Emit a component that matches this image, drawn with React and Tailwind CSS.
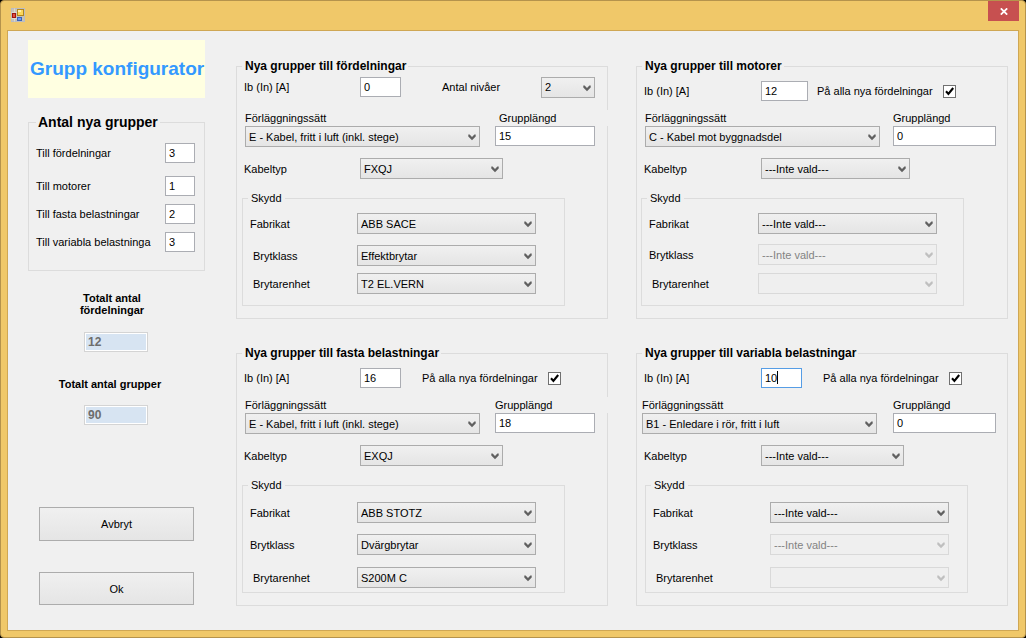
import React from "react";

const GROUPS = [
  {
    id: "fordelningar",
    title: "Nya grupper till fördelningar",
    ib: "0",
    levels: "2",
    method: "E - Kabel, fritt i luft (inkl. stege)",
    length: "15",
    cable: "FXQJ",
    protection: [
      { label: "Fabrikat", value: "ABB SACE" },
      { label: "Brytklass", value: "Effektbrytar", indent: true },
      { label: "Brytarenhet", value: "T2 EL.VERN", indent: true },
    ],
    ui: {
      top: "pb-[9px]",
      lead: "w-[116px]",
      ib: "w-[41px]",
      pair: "grid-cols-[1fr_100px] gap-x-[15px] pl-2 pr-3",
      lengthLabel: "-mr-[13px] pl-1",
      cable: "w-[143px]",
      box: "ml-[5px] mr-[42px]",
      boxBody: "pt-2 pb-[11px] pr-7",
      name: "w-[114px]",
      gap: "mt-[11px]",
      lastGap: "mt-[7px]",
    },
  },
  {
    id: "motorer",
    title: "Nya grupper till motorer",
    ib: "12",
    method: "C - Kabel mot byggnadsdel",
    length: "0",
    cable: "---Inte vald---",
    protection: [
      { label: "Fabrikat", value: "---Inte vald---" },
      { label: "Brytklass", value: "---Inte vald---", disabled: true },
      { label: "Brytarenhet", value: "", disabled: true, indent: true },
    ],
    ui: {
      top: "pb-px",
      lead: "w-[117px]",
      ib: "w-[47px]",
      all: "ml-[9px]",
      pair: "grid-cols-[1fr_103px] gap-x-[13px] pl-2 pr-[11px]",
      lengthLabel: "",
      cable: "w-[149px]",
      box: "ml-1 mr-[43px]",
      boxBody: "pt-2 pb-[11px] pr-[26px]",
      name: "w-[116px]",
      gap: "mt-[10px]",
      lastGap: "mt-2",
    },
  },
  {
    id: "fasta",
    title: "Nya grupper till fasta belastningar",
    ib: "16",
    method: "E - Kabel, fritt i luft (inkl. stege)",
    length: "18",
    cable: "EXQJ",
    protection: [
      { label: "Fabrikat", value: "ABB STOTZ" },
      { label: "Brytklass", value: "Dvärgbrytar" },
      { label: "Brytarenhet", value: "S200M C", indent: true },
    ],
    ui: {
      top: "pb-px",
      lead: "w-[116px]",
      ib: "w-[41px]",
      all: "ml-[21px]",
      pair: "grid-cols-[1fr_100px] gap-x-[15px] pl-2 pr-3",
      lengthLabel: "-mr-[13px]",
      cable: "w-[143px]",
      box: "ml-[5px] mr-[42px]",
      boxBody: "pt-2.5 pb-1 pr-7",
      name: "w-[114px]",
      gap: "mt-[11px]",
      lastGap: "mt-3",
    },
  },
  {
    id: "variabla",
    title: "Nya grupper till variabla belastningar",
    ib: "10",
    focused: true,
    method: "B1 - Enledare i rör, fritt i luft",
    length: "0",
    cable: "---Inte vald---",
    protection: [
      { label: "Fabrikat", value: "---Inte vald---" },
      { label: "Brytklass", value: "---Inte vald---", disabled: true },
      { label: "Brytarenhet", value: "", disabled: true, indent: true },
    ],
    ui: {
      top: "pb-px",
      lead: "w-[117px]",
      ib: "w-[41px]",
      all: "ml-[21px]",
      pair: "grid-cols-[1fr_103px] gap-x-4 pl-[5px] pr-[11px]",
      lengthLabel: "",
      cable: "w-[143px]",
      box: "ml-2 mr-[39px]",
      boxBody: "pt-2.5 pb-1 pr-[18px]",
      name: "w-[124px]",
      gap: "mt-[11px]",
      lastGap: "mt-3",
    },
  },
];

const COUNTS = [
  { id: "c1", label: "Till fördelningar", value: "3", gap: "" },
  { id: "c2", label: "Till motorer", value: "1", gap: "mt-[13px]" },
  { id: "c3", label: "Till fasta belastningar", value: "2", gap: "mt-2" },
  { id: "c4", label: "Till variabla belastninga", value: "3", gap: "mt-2" },
];

function TextBox({ id, value, focused, className = "" }) {
  return (
    <div className={`relative shrink-0 ${className}`}>
      <input
        id={id}
        type="text"
        defaultValue={value}
        className={`block h-5 w-full border bg-white pl-[3px] text-[11px] leading-[14px] text-black outline-none ${
          focused ? "border-[#569de5]" : "border-[#abadb3]"
        }`}
      />
      {focused && <span className="pointer-events-none absolute top-[3px] left-4 h-[13px] w-px bg-black" />}
    </div>
  );
}

function Select({ id, value, disabled, className = "" }) {
  return (
    <div className={`relative ${className}`}>
      <select
        id={id}
        disabled={disabled}
        defaultValue={value}
        className={`block h-[21px] w-full appearance-none border pr-4 pl-[3px] text-[11px] leading-[14px] opacity-100 outline-none ${
          disabled
            ? "border-[#d9d9d9] bg-[#efefef] text-[#838383]"
            : "border-[#acacac] bg-linear-to-b from-[#f0f0f0] to-[#e5e5e5] text-black"
        }`}
      >
        <option value={value}>{value}</option>
      </select>
      <svg
        viewBox="0 0 8 7"
        className={`pointer-events-none absolute top-2 right-1 h-[7px] w-2 ${
          disabled ? "text-[#bfbfbf]" : "text-[#606060]"
        }`}
        fill="currentColor"
        aria-hidden="true"
      >
        <path d="M0.3 0.6 L1.6 0.6 L4 3 L6.4 0.6 L7.7 0.6 L7.7 2.6 L4 6.3 L0.3 2.6 Z" />
      </svg>
    </div>
  );
}

function CheckBox({ id }) {
  return (
    <span className="relative ml-2.5 block size-[13px] shrink-0">
      <input
        id={id}
        type="checkbox"
        defaultChecked
        className="peer block size-[13px] appearance-none border border-[#707070] bg-white"
      />
      <svg
        viewBox="0 0 13 13"
        className="pointer-events-none absolute inset-0 hidden size-[13px] peer-checked:block"
        fill="none"
        stroke="#000"
        strokeWidth="2.1"
        aria-hidden="true"
      >
        <path d="M3 6.3 L5.4 8.9 L10.2 3" />
      </svg>
    </span>
  );
}

function LoadGroup({ group }) {
  const { id, ui } = group;
  return (
    <fieldset className="min-w-0 border border-[#dcdcdc] pb-3">
      <legend className="ml-[5px] pr-0.5 pl-[3px] text-[12px] leading-[13px] font-bold">{group.title}</legend>

      <div className={`flex h-[37px] items-center pr-3 pl-[7px] ${ui.top}`}>
        <label htmlFor={`${id}-ib`} className={`shrink-0 ${ui.lead}`}>
          Ib (In) [A]
        </label>
        <TextBox id={`${id}-ib`} value={group.ib} focused={group.focused} className={ui.ib} />
        {group.levels ? (
          <>
            <label htmlFor={`${id}-levels`} className="ml-[41px]">
              Antal nivåer
            </label>
            <Select id={`${id}-levels`} value={group.levels} className="ml-auto w-[54px]" />
          </>
        ) : (
          <>
            <label htmlFor={`${id}-all`} className={ui.all}>
              På alla nya fördelningar
            </label>
            <CheckBox id={`${id}-all`} />
          </>
        )}
      </div>

      <div className={`grid ${ui.pair}`}>
        <label htmlFor={`${id}-method`} className="h-4 leading-4">
          Förläggningssätt
        </label>
        <label htmlFor={`${id}-length`} className={`h-4 bg-[#f0f0f0] leading-4 ${ui.lengthLabel}`}>
          Grupplängd
        </label>
        <Select id={`${id}-method`} value={group.method} />
        <TextBox id={`${id}-length`} value={group.length} />
      </div>

      <div className="mt-[11px] flex items-center pl-[7px]">
        <label htmlFor={`${id}-cable`} className={`shrink-0 ${ui.lead}`}>
          Kabeltyp
        </label>
        <Select id={`${id}-cable`} value={group.cable} className={ui.cable} />
      </div>

      <fieldset className={`mt-3 min-w-0 border border-[#dcdcdc] ${ui.box}`}>
        <legend className="ml-[5px] px-[3px] leading-[14px]">Skydd</legend>
        <div className={ui.boxBody}>
          {group.protection.map((row, i) => (
            <div
              key={row.label}
              className={`flex items-center ${i === 1 ? ui.gap : ""} ${i === 2 ? ui.lastGap : ""}`}
            >
              <label
                htmlFor={`${id}-p${i}`}
                className={`shrink-0 ${row.indent ? "pl-2.5" : "pl-[7px]"} ${ui.name}`}
              >
                {row.label}
              </label>
              <Select id={`${id}-p${i}`} value={row.value} disabled={row.disabled} className="flex-1" />
            </div>
          ))}
        </div>
      </fieldset>
    </fieldset>
  );
}

function Total({ id, value, children, className }) {
  return (
    <div className={`flex flex-col items-center pr-px ${className}`}>
      {children}
      <input
        id={id}
        type="text"
        disabled
        defaultValue={value}
        className="block h-5 w-16 border border-[#d4d4d4] bg-[#d7e4f2] pl-[3px] text-[12px] font-bold text-[#6d6d6d] inset-ring inset-ring-white"
      />
    </div>
  );
}

function FormIcon() {
  return (
    <svg viewBox="0 0 14 14" className="size-[14px]" aria-hidden="true">
      <rect x="0.5" y="0.5" width="13" height="13" fill="#c9c3b4" stroke="#b9bcc4" />
      <path d="M0.5 4.5H6 M3.5 0.5V13.5 M0.5 10.5H6" stroke="#dcd9d2" fill="none" />
      <rect x="1.5" y="5.5" width="3" height="4" fill="#e0503f" stroke="#a01510" />
      <rect x="6.5" y="1.5" width="6" height="6" fill="#fbd75b" stroke="#b3861b" />
      <rect x="7" y="2" width="3" height="2" fill="#fff0ae" />
      <rect x="6.5" y="9.5" width="4" height="3" fill="#6c9cf0" stroke="#3b62b8" />
    </svg>
  );
}

const BUTTON =
  "mx-[11px] flex items-center justify-center border border-[#acacac] bg-linear-to-b from-[#f0f0f0] to-[#e5e5e5]";

export default function App() {
  return (
    <div className="flex min-h-screen bg-black font-['Liberation_Sans',Arial,sans-serif] text-[11px] leading-[14px] text-black">
      <div className="flex flex-1 flex-col rounded-[4px] border border-[#b5934c] bg-[#f0c869]">
        <header className="flex h-[29px] items-start justify-between pr-1.5 pl-2.5">
          <div className="pt-[7px]">
            <FormIcon />
          </div>
          <button
            type="button"
            aria-label="Stäng"
            className="flex h-5 w-[31px] items-center justify-center bg-[#c75050] text-white"
          >
            <svg viewBox="0 0 8 7" className="h-[7px] w-2" aria-hidden="true">
              <path d="M0.8 0.4 L7.2 6.6 M7.2 0.4 L0.8 6.6" stroke="currentColor" strokeWidth="1.8" />
            </svg>
          </button>
        </header>

        <main className="mx-1.5 mb-1.5 flex flex-1 border border-[#cfa754] bg-[#f0f0f0] pr-2.5 pl-5">
          <aside className="flex w-[177px] shrink-0 flex-col pt-[9px]">
            <h1 className="flex h-[58px] items-center overflow-hidden bg-[#ffffe1] pl-0.5 text-[19px] font-bold whitespace-nowrap text-[#3399ff]">
              Grupp konfigurator
            </h1>

            <fieldset className="mt-4 min-w-0 border border-[#dcdcdc] pt-3 pr-[9px] pb-[18px] pl-[7px]">
              <legend className="px-0.5 text-[14px] leading-[17px] font-bold">Antal nya grupper</legend>
              {COUNTS.map((c) => (
                <div key={c.id} className={`flex items-center justify-between ${c.gap}`}>
                  <label htmlFor={c.id}>{c.label}</label>
                  <TextBox id={c.id} value={c.value} className="w-[30px]" />
                </div>
              ))}
            </fieldset>

            <Total id="total-fordelningar" value="12" className="mt-[21px] gap-4">
              <label htmlFor="total-fordelningar" className="pr-2 text-center leading-3 font-bold">
                Totalt antal
                <br />
                fördelningar
              </label>
            </Total>
            <Total id="total-grupper" value="90" className="mt-[25px] gap-[14px]">
              <label htmlFor="total-grupper" className="pr-3 font-bold">
                Totalt antal grupper
              </label>
            </Total>

            <button type="button" className={`mt-[82px] h-[34px] ${BUTTON}`}>
              Avbryt
            </button>
            <button type="button" className={`mt-[31px] h-[33px] ${BUTTON}`}>
              Ok
            </button>
          </aside>

          <div className="ml-[31px] grid flex-1 grid-cols-2 content-start gap-7 pt-[29px]">
            {GROUPS.map((g) => (
              <LoadGroup key={g.id} group={g} />
            ))}
          </div>
        </main>
      </div>
    </div>
  );
}
